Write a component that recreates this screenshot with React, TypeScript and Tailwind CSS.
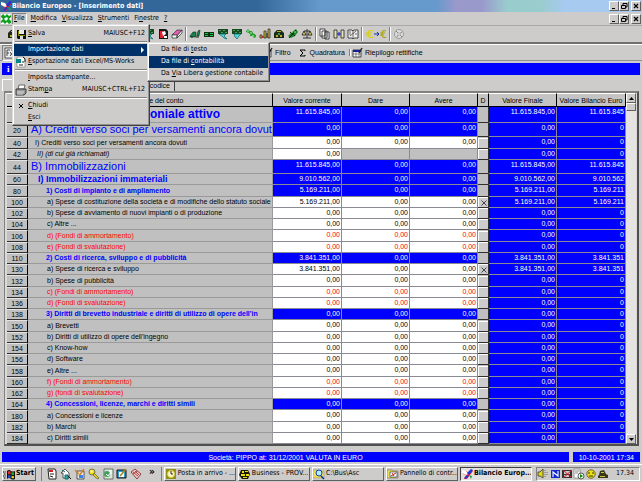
import React from "react";

type Kind = "title" | "h1" | "h2" | "h3" | "item" | "italic" | "fund";

type Row = {
  code: string;
  label: string;
  kind: Kind;
  value?: string;
  checked?: boolean;
};

const rows: Row[] = [
  { code: "10", label: "Stato patrimoniale attivo", kind: "title", value: "11.615.845" },
  { code: "20", label: "A) Crediti verso soci per versamenti ancora dovuti", kind: "h1" },
  { code: "40", label: "I) Crediti verso soci per versamenti ancora dovuti", kind: "item" },
  { code: "42", label: "II) (di cui già richiamati)", kind: "italic" },
  { code: "44", label: "B) Immobilizzazioni", kind: "h1", value: "11.615.845" },
  { code: "60", label: "I) Immobilizzazioni immateriali", kind: "h2", value: "9.010.562" },
  { code: "80", label: "1) Costi di impianto e di ampliamento", kind: "h3", value: "5.169.211" },
  { code: "100", label: "a) Spese di costituzione della società e di modifiche dello statuto sociale", kind: "item", value: "5.169.211", checked: true },
  { code: "102", label: "b) Spese di avviamento di nuovi impianti o di produzione", kind: "item" },
  { code: "104", label: "c) Altre ...", kind: "item" },
  { code: "106", label: "d) (Fondi di ammortamento)", kind: "fund" },
  { code: "108", label: "e) (Fondi di svalutazione)", kind: "fund" },
  { code: "110", label: "2) Costi di ricerca, sviluppo e di pubblicità", kind: "h3", value: "3.841.351" },
  { code: "130", label: "a) Spese di ricerca e sviluppo", kind: "item", value: "3.841.351", checked: true },
  { code: "132", label: "b) Spese di pubblicità", kind: "item" },
  { code: "134", label: "c) (Fondi di ammortamento)", kind: "fund" },
  { code: "136", label: "d) (Fondi di svalutazione)", kind: "fund" },
  { code: "138", label: "3) Diritti di brevetto industriale e diritti di utilizzo di opere dell'in", kind: "h3" },
  { code: "150", label: "a) Brevetti", kind: "item" },
  { code: "152", label: "b) Diritti di utilizzo di opere dell'ingegno", kind: "item" },
  { code: "154", label: "c) Know-how", kind: "item" },
  { code: "156", label: "d) Software", kind: "item" },
  { code: "158", label: "e) Altre ...", kind: "item" },
  { code: "160", label: "f) (Fondi di ammortamento)", kind: "fund" },
  { code: "162", label: "g) (fondi di svalutazione)", kind: "fund" },
  { code: "164", label: "4) Concessioni, licenze, marchi e diritti simili", kind: "h3" },
  { code: "180", label: "a) Concessioni e licenze", kind: "item" },
  { code: "182", label: "b) Marchi", kind: "item" },
  { code: "184", label: "c) Diritti simili", kind: "item" },
];

const labelStyle: Record<Kind, string> = {
  title: "text-center text-[12px] leading-[15px] font-bold text-[#0000ff]",
  h1: "pl-[3px] text-[11px] leading-[13px] text-[#0000ff]",
  h2: "pl-[10px] text-[9px] leading-[10px] font-bold text-[#0000ff]",
  h3: "pl-[18px] text-[7px] leading-[10px] font-bold text-[#0000ff]",
  item: "pl-[19px] text-[7px] leading-[10px] text-black",
  italic: "pl-[9px] text-[7px] leading-[10px] italic text-black",
  fund: "pl-[19px] text-[7px] leading-[10px] text-[#ff0000]",
};

const raised = "border border-t-white border-l-white border-r-[#606060] border-b-[#606060] bg-[#cecccb]";
const sunken = "border border-t-[#808080] border-l-[#808080] border-r-white border-b-white";

function Svg({ children, w = 12, className = "" }: { children: React.ReactNode; w?: number; className?: string }) {
  return (
    <svg width={w} height="12" viewBox={`0 0 ${w} 12`} className={`shrink-0 ${className}`} aria-hidden="true">
      {children}
    </svg>
  );
}

const AppLogo = () => (
  <Svg>
    <path d="M1 3h4l2 2 3-3 2 1-3 4-3 4H3l2-4-3-1z" fill="#f02020" />
    <path d="M1 2l4 1 2 3-2 1-4-2z" fill="#fff" />
    <path d="M6 5l4-4 2 1-4 5z" fill="#2030e0" />
    <path d="M3 10l3-3 2 1-3 3z" fill="#2838d0" />
    <path d="M8 7l3 1-1 3z" fill="#20a040" />
  </Svg>
);
const GreenLogo = () => (
  <Svg>
    <rect x="1" y="1" width="10" height="10" fill="#fff" />
    <path d="M1 3l2-2 2 2 2-2 2 2 2-1v2L9 6l2 2v2l-2 1-2-2-2 2-2-2-2 1V8l2-2-2-2zM5 5L4 6l2 2 2-2-1-2z" fill="#10a020" />
  </Svg>
);
const Floppy = () => (
  <Svg>
    <path d="M2 2h9v9H3L2 10z" fill="#111" />
    <path d="M4 2h5v4H4z" fill="#e8e8e8" />
    <path d="M3 3h1v4h6v1H3z" fill="#8a8a00" />
    <path d="M5 8h3v3H5z" fill="#ddd" />
  </Svg>
);
const ExcelFile = () => (
  <Svg>
    <path d="M2 1h7l1 2v8H2z" fill="#fff" stroke="#555" strokeWidth=".5" />
    <path d="M1 3h5v4H1z" fill="#088" />
    <path d="M8 1l2 2v3M4 9h4M7 6h2" stroke="#222" fill="none" />
  </Svg>
);
const Printer = () => (
  <Svg>
    <path d="M4 1h6L9 5H3z" fill="#fff" stroke="#333" strokeWidth=".7" />
    <path d="M1 5h10v4l-2 2H1z" fill="#999" stroke="#222" strokeWidth=".8" />
    <path d="M2 8h7M2 10h6" stroke="#eee" strokeWidth=".8" />
  </Svg>
);
const RedDoc = () => (
  <Svg>
    <path d="M2 1h7l2 2v8H2z" fill="#181818" />
    <path d="M3 3h3l2 3-2 4H3z" fill="#e02030" />
    <path d="M5 4l3-1 1 3-3 2zM7 8h3v2H7z" fill="#fff" />
  </Svg>
);
const Eraser = () => (
  <Svg>
    <path d="M1 7l5-5h5L6 8z" fill="#e060b0" stroke="#222" strokeWidth=".6" />
    <path d="M1 7h5v3H1zM6 8l5-6v3l-5 5z" fill="#fff" stroke="#222" strokeWidth=".7" />
  </Svg>
);
const Truck = () => (
  <Svg>
    <path d="M1 8l3-4h3v5H1zM8 8l1-5 2-1-1 6z" fill="#188048" stroke="#083018" strokeWidth=".6" />
    <path d="M2 9h2M7 9h3" stroke="#222" />
  </Svg>
);
const Banknotes = () => (
  <Svg>
    <path d="M1 4h10v5H1z" fill="#103018" />
    <path d="M2 5h3v1H2zM7 5h3v1H7zM2 7h3v1H2zM7 7h3v1H7z" fill="#20c040" />
  </Svg>
);
const GridArrow = ({ flip = false }: { flip?: boolean }) => (
  <Svg>
    <path d="M1 1h10v5H1z" fill="#184820" />
    <path d="M2 2h2v1H2zM6 2h2v1H6zM4 4h2v1H4zM8 4h2v1H8z" fill="#40a050" />
    <path d={flip ? "M3 6h7L8 8l-2 3-2-2z" : "M2 6h7l-2 2 3 3-3-1-2-2z"} fill="#50d8d8" stroke="#086868" strokeWidth=".7" />
  </Svg>
);
const Checks = () => (
  <Svg>
    <path d="M1 3l2-2 2 2 2 0 1 2 3 2v2l-2 1-2-2-2 0-1-3-3-1z" fill="#28a030" />
    <path d="M2 3h2M5 5h2M7 8h2M4 6l1 1" stroke="#e0f8e0" strokeWidth=".8" />
  </Svg>
);
const Bars = () => (
  <Svg>
    <path d="M1 7h2v3H1zM5 3h2v7H5zM9 1h2v9H9z" fill="#c8b830" stroke="#333" strokeWidth=".8" />
    <path d="M3 8h2v2H3z" fill="#c03030" />
    <path d="M7 5h2v5H7z" fill="#555" />
  </Svg>
);
const Safe = () => (
  <Svg>
    <path d="M1 5l3-3h4l3 3v5H1z" fill="#202818" />
    <path d="M4 3h4v1H4zM3 7h2v2H3zM7 7h2v2H7z" fill="#b8b030" />
    <path d="M5 5h2v2H5z" fill="#20a050" />
  </Svg>
);
const Plant = () => (
  <Svg>
    <path d="M1 8l4-4 4-3 2 3-3 4-4 2z" fill="#188828" />
    <path d="M2 10l7-8M3 4l5 4" stroke="#102810" />
    <path d="M4 4h2M7 4h2" stroke="#a0e8a0" />
  </Svg>
);
const Scale = () => (
  <Svg>
    <path d="M6 1v9M3 3h6M3 3L1 7h4zM9 3L7 7h4zM2 10h8" stroke="#222" strokeWidth=".9" fill="#e8e060" />
  </Svg>
);
const Copies = () => (
  <Svg>
    <path d="M1 1h5v7H1zM3 3h5v7H3zM6 4h4v7H6z" fill="#fff" stroke="#222" strokeWidth=".8" />
    <path d="M7 6h2M7 8h2" stroke="#555" strokeWidth=".6" />
  </Svg>
);
const Split = () => (
  <Svg>
    <path d="M1 2h3v8H1zM8 2h3v8H8z" fill="#e8e0b0" stroke="#222" strokeWidth=".8" />
    <path d="M4 6h4M6 4v4" stroke="#1020d0" />
  </Svg>
);
const Book = () => (
  <Svg>
    <path d="M1 2h4l1 1 1-1h4v8H7l-1 1-1-1H1z" fill="#eee" stroke="#222" strokeWidth=".8" />
    <path d="M2 4h2M2 6h2M3 8l6-5M8 6h2M6 3v7" stroke="#333" strokeWidth=".7" />
  </Svg>
);
const Euro = () => (
  <Svg w={24}>
    <path d="M9 3Q4 1 4 6t5 3M1 5h7M1 7h6" stroke="#d8d000" strokeWidth="1.1" fill="none" />
    <path d="M10 6h4M13 4l2 2-2 2" stroke="#1030a0" fill="none" />
    <path d="M22 3q-4-2-4 3t4 3M16 5h5M16 7h4" stroke="#a8a010" strokeWidth="1.1" fill="none" />
  </Svg>
);
const Disc = () => (
  <Svg>
    <circle cx="6" cy="6" r="4.5" fill="#ddd" stroke="#999" />
    <path d="M3 3l3 3 3-2M6 6l-2 3M6 6l3 3" stroke="#888" fill="none" />
    <circle cx="6" cy="6" r="1.2" fill="#fff" stroke="#777" strokeWidth=".5" />
  </Svg>
);
const Fx = () => (
  <Svg>
    <path d="M1 1h10v10H1z" fill="#eee" stroke="#333" strokeWidth=".8" />
    <path d="M3 9V3h3M3 6h2M6 9l3-4M6 5l3 4M7 3h3" stroke="#222" strokeWidth=".8" fill="none" />
  </Svg>
);
const Table = () => (
  <Svg>
    <path d="M1 3h8v7H1z" fill="#fff" stroke="#222" strokeWidth=".8" />
    <path d="M1 3h8v2H1z" fill="#1020a0" />
    <path d="M1 7h8M4 5v5M7 5v5" stroke="#555" strokeWidth=".7" />
    <path d="M7 6l3-5" stroke="#222" strokeWidth="1.4" />
  </Svg>
);
const WinFlag = () => (
  <Svg>
    <path d="M4 3q2-2 4 0 2 1 4 0v8q-2 1-4 0-2-2-4 0z" fill="#111" />
    <path d="M5 3.5q1-1 2.5 0v3Q6 5.5 5 6.5z" fill="#f03020" />
    <path d="M8.5 4q1.5.8 2.5.3v2.500q-1 .5-2.500 0z" fill="#20b030" />
    <path d="M5 7.5q1-1 2.5 0v2.500Q6 9 5 10z" fill="#2050e0" />
    <path d="M8.5 7.8q1.5.7 2.5.2v2q-1 .6-2.500 0z" fill="#f0d020" />
    <path d="M0 4h3M1 6h2M0 8h3M1 10h2" stroke="#111" strokeDasharray="1 .6" />
  </Svg>
);
const DocRed = () => (
  <Svg>
    <path d="M2 1h7l1 2v8H3z" fill="#fff" stroke="#222" />
    <path d="M3 2h4v2H3z" fill="#d02020" />
    <path d="M4 6h4M4 8l3 1" stroke="#222" />
  </Svg>
);
const House = () => (
  <Svg>
    <path d="M1 5l4-4 4 4v5H3V5z" fill="#fff" stroke="#333" strokeWidth=".8" />
    <path d="M2 2l3 2M5 7h3v4H5z" stroke="#127070" fill="#30a8a0" />
    <path d="M8 8l3 3" stroke="#111" />
  </Svg>
);
const Tools = () => (
  <Svg>
    <path d="M3 3h7v8H3z" fill="#eee" stroke="#333" strokeWidth=".8" />
    <path d="M1 2l4 4M10 1L5 8" stroke="#d08020" strokeWidth="1.4" />
    <path d="M5 7h4v3H5z" fill="#4080e0" />
  </Svg>
);
const Key = () => (
  <Svg>
    <circle cx="4" cy="4" r="3" fill="#f0e020" stroke="#555" strokeWidth=".8" />
    <path d="M6 5l5 5-1 1-2-1-3-3z" fill="#e0d010" stroke="#444" strokeWidth=".6" />
    <circle cx="3.5" cy="3.5" r="1" fill="#fff" />
  </Svg>
);
const GreenDoc = () => (
  <Svg>
    <path d="M2 1h9v10H2z" fill="#d8e8d8" stroke="#444" strokeWidth=".7" />
    <circle cx="5" cy="6" r="3" fill="#40a060" />
    <path d="M7 3h3M8 5h2M4 6l2 2 3-4" stroke="#fff" fill="none" />
  </Svg>
);
const Desktop = () => (
  <Svg>
    <path d="M1 2h9v8H1z" fill="#30a0d0" stroke="#111" />
    <path d="M3 4h5v5H3z" fill="#fff" />
    <path d="M4 8l6-7" stroke="#b08020" strokeWidth="1.6" />
  </Svg>
);
const Diamond = () => (
  <Svg>
    <path d="M1 4l4-3 6 5-4 5z" fill="#e8c8c8" stroke="#802020" strokeWidth=".8" />
    <path d="M3 4l5 4M5 3l4 4M3 6l4-3" stroke="#c04040" />
  </Svg>
);
const Clock = () => (
  <Svg>
    <path d="M1 1h10v10H1z" fill="#909018" />
    <circle cx="6" cy="6" r="3.5" fill="#fff8d0" stroke="#d8d040" />
    <path d="M6 3v3h2" stroke="#222" fill="none" />
  </Svg>
);
const Bee = () => (
  <Svg>
    <path d="M2 2h7l2 4-2 5H3L0 7z" fill="#181800" />
    <path d="M3 3h2v2H3zM6 3h3v1H6zM2 6h4v2H2zM7 6h3v2H7zM4 9h4v1H4z" fill="#e8e020" />
  </Svg>
);
const FolderFind = () => (
  <Svg>
    <path d="M0 2h5l1 1h5v7H0z" fill="#f0e050" stroke="#886" strokeWidth=".5" />
    <circle cx="6" cy="5" r="3" fill="#b0f0ff" stroke="#1040c0" />
    <path d="M8 8l3 3" stroke="#1030a0" strokeWidth="1.6" />
  </Svg>
);
const Panel = () => (
  <Svg>
    <path d="M0 2h5l1 1h5v7H0z" fill="#f0e050" stroke="#665" strokeWidth=".6" />
    <path d="M3 4h7v5H3z" fill="#fff" stroke="#223" strokeWidth=".6" />
    <path d="M4 8l5-3M5 5l2 3" stroke="#c03020" />
  </Svg>
);
const Speaker = () => (
  <Svg>
    <path d="M1 4h2l3-3v9L3 8H1z" fill="#e0d820" stroke="#333" strokeWidth=".8" />
    <path d="M8 2v8M10 4v4" stroke="#555" strokeDasharray="1 1" strokeWidth=".8" />
  </Svg>
);
const Norton = () => (
  <Svg>
    <path d="M2 2h9v8H2z" fill="#1028d0" />
    <path d="M4 9V4l5 4V3" stroke="#fff" strokeWidth="1.1" fill="none" />
  </Svg>
);
const NetOff = () => (
  <Svg>
    <path d="M1 2h10v8H1z" fill="#333" />
    <path d="M3 3h6v3H3zM3 7h5v2H3z" fill="#ccc" />
    <path d="M2 2l8 7M11 2L2 10" stroke="#d02020" />
  </Svg>
);
const PagePlay = () => (
  <Svg>
    <path d="M1 1h6v9H1z" fill="#fff" stroke="#777" strokeWidth=".7" />
    <path d="M2 3h4M2 5h3" stroke="#555" strokeWidth=".7" />
    <circle cx="8" cy="8" r="3" fill="#e8ffe8" stroke="#222" strokeWidth=".7" />
    <path d="M7 6l3 2-3 2z" fill="#108020" />
  </Svg>
);
const Smile = () => (
  <Svg>
    <circle cx="6" cy="6" r="4.2" fill="#f0e010" stroke="#443" strokeWidth=".8" />
    <path d="M4 4v2M8 4v2M4 8h4" stroke="#222" fill="none" strokeWidth=".9" />
  </Svg>
);
const Modem = () => (
  <Svg>
    <path d="M2 7l1-4 4-1 2 4 2 1v3H1V8z" fill="#383818" />
    <path d="M4 4h3v1H4zM3 8h5v1H3z" fill="#c8c050" />
  </Svg>
);

function Tool({ label, children }: { label: string; children: React.ReactNode }) {
  return (
    <button type="button" aria-label={label} className="flex h-[14px] min-w-[14px] items-center justify-center">
      {children}
    </button>
  );
}

const Sep = () => <span className="mx-px h-[14px] w-[2px] shrink-0 border-l border-l-[#808080] border-r border-r-white" />;

function WindowButtons({ target }: { target: string }) {
  const box = `${raised} flex h-[10px] w-[10px] items-center justify-center`;
  return (
    <div className="ml-auto flex pr-px">
      <button type="button" aria-label={`Riduci ${target}`} className={box}>
        <svg width="8" height="8" aria-hidden="true"><path d="M2 6.5h3" stroke="#000" /></svg>
      </button>
      <button type="button" aria-label={`Ripristina ${target}`} className={box}>
        <svg width="8" height="8" aria-hidden="true"><path d="M3 3V1.5h4V5H5.500M1.500 3.500h4V6.500h-4z" stroke="#000" fill="none" /></svg>
      </button>
      <button type="button" aria-label={`Chiudi ${target}`} className={`${box} ml-[2px]`}>
        <svg width="8" height="8" aria-hidden="true"><path d="M2 2l4 4M6 2L2 6" stroke="#000" strokeWidth="1.2" /></svg>
      </button>
    </div>
  );
}

function MenuItem({ icon, label, keyIndex, shortcut, active, arrow, nested }: { icon?: React.ReactNode; label: string; keyIndex?: number; shortcut?: string; active?: boolean; arrow?: boolean; nested?: boolean }) {
  const k = keyIndex ?? -1;
  return (
    <button
      type="button"
      role="menuitem"
      className={`flex h-[12px] w-full items-center whitespace-nowrap pr-[3px] text-left ${active ? "bg-[#003068] text-white" : "text-black"}`}
    >
      <span className={`flex shrink-0 justify-center ${nested ? "w-[12px]" : "w-[14px]"}`}>{icon}</span>
      <span>
        {k < 0 ? label : <>{label.slice(0, k)}<u>{label[k]}</u>{label.slice(k + 1)}</>}
      </span>
      {shortcut && <span className="ml-auto">{shortcut}</span>}
      {arrow && (
        <svg className="ml-auto" width="4" height="6" aria-hidden="true"><path d="M0 0l3 3-3 3z" fill="#fff" /></svg>
      )}
    </button>
  );
}

const MenuLine = () => <div role="separator" className="mx-px my-px h-[2px] border-t border-t-[#808080] border-b border-b-white" />;

function FileMenu() {
  return (
    <div role="menu" aria-label="File" className="absolute top-[11px] left-0 z-20 w-[138px] border border-t-[#dddddd] border-l-[#dddddd] border-r-[#404040] border-b-[#404040] bg-[#cecccb] p-px pt-[3px] shadow-[inset_-1px_-1px_0_#909090,inset_1px_1px_0_#ffffff]">
      <MenuItem icon={<Floppy />} label="Salva" keyIndex={0} shortcut="MAIUSC+F12" />
      <MenuLine />
      <div className="relative">
        <MenuItem label="Importazione dati" active arrow />
        <div role="menu" aria-label="Importazione dati" className="absolute -top-[2px] left-full z-30 -ml-px w-[123px] border border-t-[#dddddd] border-l-[#dddddd] border-r-[#404040] border-b-[#404040] bg-[#cecccb] p-px shadow-[inset_-1px_-1px_0_#909090,inset_1px_1px_0_#ffffff]">
          <MenuItem nested label="Da file di testo" keyIndex={11} />
          <MenuItem nested label="Da file di contabilità" keyIndex={11} active />
          <MenuItem nested label="Da Via Libera gestione contabile" keyIndex={3} />
        </div>
      </div>
      <MenuItem icon={<ExcelFile />} label="Esportazione dati Excel/MS-Works" keyIndex={0} />
      <MenuLine />
      <MenuItem label="Imposta stampante..." keyIndex={0} />
      <MenuItem icon={<Printer />} label="Stampa" keyIndex={4} shortcut="MAIUSC+CTRL+F12" />
      <MenuLine />
      <MenuItem
        icon={<svg width="6" height="6" aria-hidden="true"><path d="M1 1l4 4M5 1L1 5" stroke="#000" /></svg>}
        label="Chiudi"
        keyIndex={0}
      />
      <MenuItem label="Esci" keyIndex={0} />
    </div>
  );
}

const menus = [
  ["M", "odifica"],
  ["V", "isualizza"],
  ["S", "trumenti"],
];

function GridRow({ row, index }: { row: Row; index: number }) {
  const heading = row.kind === "title" || row.kind === "h1" || row.kind === "h2" || row.kind === "h3";
  const amount = row.value ? `${row.value},00` : "0,00";
  const height =
    row.kind === "title" ? "h-[16px]" : row.kind === "h1" ? "h-[14px]" : index % 4 === 2 ? "h-[12px]" : "h-[11px]";
  const tone = heading ? "bg-[#0000ff] text-white" : row.kind === "fund" ? "bg-white text-[#ff0000]" : "bg-white text-black";
  const line = "border-r border-b border-[#8a8a94] p-0 pr-px text-right align-top leading-[10px] whitespace-nowrap overflow-hidden";
  const blank = row.kind === "italic";
  return (
    <tr className={height}>
      <th scope="row" className="border-t border-t-[#e4e4e4] border-r border-r-black border-b border-b-[#303030] bg-[#c0c0c0] p-0 text-center font-normal leading-[9px]">
        {row.code}
      </th>
      <td className={`overflow-hidden border-b border-r border-[#9a9a9a] bg-[#c0c0c0] p-0 whitespace-nowrap ${row.code === "40" ? "pl-[7px] text-[7px] leading-[10px]" : labelStyle[row.kind]}`}>
        {row.label}
      </td>
      <td className={`${line} ${tone}`}>{amount}</td>
      <td className={`${line} ${blank ? "bg-[#c0c0c0]" : tone}`}>{blank ? "" : "0,00"}</td>
      <td className={`${line} ${blank ? "bg-[#c0c0c0]" : tone}`}>{blank ? "" : "0,00"}</td>
      <td className="border-r border-b border-[#303030] bg-[#c0c0c0] p-0">
        {!heading && (
          <label className="relative block h-[10px] border-t border-l border-white bg-[#cccccc]">
            <input type="checkbox" aria-label={`Dettaglio ${row.code}`} defaultChecked={row.checked} className="peer block h-full w-full appearance-none" />
            <svg className="pointer-events-none absolute inset-0 m-auto hidden peer-checked:block" width="6" height="6" aria-hidden="true">
              <path d="M.5.5l5 5M5.500.5l-5 5" stroke="#333" strokeWidth=".9" />
            </svg>
          </label>
        )}
      </td>
      <td className={`${line} bg-[#0000ff] text-white`}>{amount}</td>
      <td className={`${line} bg-[#0000ff] text-white`}>{row.value ?? "0"}</td>
    </tr>
  );
}

const headers = ["", "Descrizione del conto", "Valore corrente", "Dare", "Avere", "D", "Valore Finale", "Valore Bilancio Euro"];

function LedgerTable() {
  return (
    <table className="w-full table-fixed border-separate border-spacing-0 text-[7px]">
      <colgroup>
        <col className="w-[21px]" />
        <col />
        <col className="w-[69px]" />
        <col className="w-[68px]" />
        <col className="w-[68px]" />
        <col className="w-[11px]" />
        <col className="w-[68px]" />
        <col className="w-[69px]" />
      </colgroup>
      <thead>
        <tr className="h-[14px]">
          {headers.map((h, i) => (
            <th key={i} scope="col" className="border-t border-t-white border-r border-r-black border-b border-b-black bg-[#c4c4c4] p-0 text-center font-normal leading-[9px] whitespace-nowrap">
              {h}
            </th>
          ))}
        </tr>
      </thead>
      <tbody>
        {rows.map((r, i) => (
          <GridRow key={r.code} row={r} index={i} />
        ))}
      </tbody>
    </table>
  );
}

const tasks = [
  { icon: <Clock />, label: "Posta in arrivo - ..." },
  { icon: <Bee />, label: "Business - PROV..." },
  { icon: <FolderFind />, label: "C:\\Bus\\Asc" },
  { icon: <Panel />, label: "Pannello di contr..." },
  { icon: <AppLogo />, label: "Bilancio Europ...", active: true },
];

export default function App() {
  return (
    <div className="flex h-screen flex-col overflow-hidden bg-[#cecccb] font-['Liberation_Sans',Arial,sans-serif] text-[7px] leading-[9px] text-black">
      <header className="flex h-[12px] shrink-0 items-center bg-[linear-gradient(90deg,#336699_0%,#336699_40%,#6699cc_50%,#6699cc_68%,#9999cc_71%,#9999cc_75%,#99cccc_79%,#99cccc_84%,#a6caf0_88%)] font-['DejaVu_Sans_Condensed','DejaVu_Sans',sans-serif] font-bold text-white">
        <AppLogo />
        <h1 className="whitespace-nowrap">Bilancio Europeo - [Inserimento dati]</h1>
        <WindowButtons target="applicazione" />
      </header>

      <nav className="flex h-[14px] shrink-0 items-center border-b border-b-[#a8a8a8] font-['DejaVu_Sans_Condensed','DejaVu_Sans',sans-serif]">
        <GreenLogo />
        <div className="relative">
          <button type="button" aria-haspopup="menu" aria-expanded="true" className={`${sunken} flex h-[12px] items-center px-px`}><span><u>F</u>ile</span></button>
          <FileMenu />
        </div>
        <div className="flex gap-[5px] pl-[4px]">
          {menus.map(([a, b]) => (
            <button type="button" key={a}><u>{a}</u>{b}</button>
          ))}
          <button type="button">Fi<u>n</u>estre</button>
          <button type="button"><u>?</u></button>
        </div>
        <WindowButtons target="documento" />
      </nav>

      <div role="toolbar" aria-label="Standard" className="flex h-[18px] shrink-0 items-center border-b-2 border-b-[#707070] pl-[6px]">
        <Tool label="Apri"><Safe /></Tool>
        <div className="flex items-center pl-[122px]">
          <Tool label="Griglia"><GridArrow /></Tool>
          <Tool label="Anteprima"><RedDoc /></Tool>
          <Tool label="Cancella"><Eraser /></Tool>
          <Sep />
          <Tool label="Fornitori"><Truck /></Tool>
          <Tool label="Cassa"><Banknotes /></Tool>
          <Tool label="Importa"><GridArrow /></Tool>
          <Tool label="Esporta"><GridArrow flip /></Tool>
          <Tool label="Controlli"><Checks /></Tool>
          <Tool label="Grafico"><Bars /></Tool>
          <Tool label="Cassaforte"><Safe /></Tool>
          <Tool label="Ammortamenti"><Plant /></Tool>
          <Tool label="Bilancia"><Scale /></Tool>
          <Sep />
          <Tool label="Copia"><Copies /></Tool>
          <Tool label="Confronta"><Split /></Tool>
          <Tool label="Libro"><Book /></Tool>
          <Sep />
          <Tool label="Converti in euro"><Euro /></Tool>
          <Sep />
          <Tool label="Disco"><Disc /></Tool>
        </div>
      </div>

      <div role="toolbar" aria-label="Strumenti" className="flex h-[17px] shrink-0 items-center border-t border-t-white border-b border-b-[#909090] pl-[2px]">
        <span className={`${sunken} flex`}><Tool label="Formula"><Fx /></Tool></span>
        <div className="flex items-center pl-[244px]">
          <button type="button" className="flex items-center gap-px"><Table />Filtro</button>
          <button type="button" className="flex items-center gap-[4px] pl-[8px]">
            <svg width="7" height="8" aria-hidden="true"><path d="M6 2V1H1l3 3-3 3h5V6" stroke="#000" fill="none" /></svg>
            Quadratura
          </button>
          <span className="ml-[3px]"><Sep /></span>
          <button type="button" className="flex items-center gap-px whitespace-nowrap"><Table />Riepilogo rettifiche</button>
        </div>
      </div>

      <div className="mx-[2px] mt-[2px] flex h-[12px] shrink-0 items-center bg-[#0000ff] pl-[5px] font-['Liberation_Serif',serif] text-[9px] font-bold text-white">i</div>

      <div className="mx-[2px] mt-[4px] flex h-[12px] shrink-0" role="tablist">
        <button type="button" role="tab" aria-selected="true" aria-label="Descrizione" className="w-[85px] border-t border-l border-white border-r border-r-[#404040]" />
        <button type="button" role="tab" aria-selected="false" className="w-[88px] border-t border-t-white border-r border-r-[#404040] pr-[4px] text-right">codice</button>
      </div>

      <main className="mr-[3px] ml-[4px] flex min-h-0 flex-1 border-t-2 border-t-[#808080] border-r-2 border-r-[#505050] border-b-2 border-b-[#505050] border-l border-l-[#808080] bg-[#dcdad9] pl-[2px]">
        <div className="min-w-0 flex-1 overflow-hidden"><LedgerTable /></div>
        <div className="mr-px flex w-[10px] shrink-0 flex-col bg-[#e6e4e2]">
          <button type="button" aria-label="Scorri su" className={`${raised} flex h-[10px] items-center justify-center`}>
            <svg width="5" height="3" aria-hidden="true"><path d="M0 3l2.500-3L5 3z" /></svg>
          </button>
          <span className={`${raised} h-[8px]`} />
          <button type="button" aria-label="Scorri giù" className={`${raised} mt-auto flex h-[10px] items-center justify-center`}>
            <svg width="5" height="3" aria-hidden="true"><path d="M0 0h5L2.500 3z" /></svg>
          </button>
        </div>
      </main>

      <footer className="mx-[2px] mt-[6px] flex h-[10px] shrink-0 gap-[4px] text-white">
        <div className="flex flex-1 items-center justify-center bg-[#0000ff]">Società: PIPPO at: 31/12/2001 VALUTA IN EURO</div>
        <div className="flex w-[67px] items-center justify-end bg-[#0000ff] pr-[6px]">10-10-2001 17:34</div>
      </footer>

      <div className="mt-[2px] flex h-[18px] shrink-0 items-center border-t border-t-white px-[2px] font-['DejaVu_Sans_Condensed','DejaVu_Sans',sans-serif]">
        <button type="button" className={`${raised} flex h-[14px] w-[34px] shrink-0 items-center gap-px font-bold`}><WinFlag />Start</button>
        <div className="ml-[5px] flex items-center border-l border-l-[#808080] pl-[3px]">
          <Tool label="Documento"><DocRed /></Tool>
          <Tool label="Home"><House /></Tool>
          <Tool label="Utilità"><Tools /></Tool>
          <Tool label="Chiavi"><Key /></Tool>
          <Tool label="Rete"><GreenDoc /></Tool>
          <Tool label="Desktop"><Desktop /></Tool>
          <Tool label="Agenda"><Diamond /></Tool>
        </div>
        <button type="button" aria-label="Altri" className="mx-[6px] pb-[4px] text-[10px] font-bold">»</button>
        <div className="flex min-w-0 flex-1 gap-[2px] border-l border-l-[#808080] pl-[2px]">
          {tasks.map((t) => (
            <button
              type="button"
              key={t.label}
              className={`flex h-[14px] min-w-0 flex-1 items-center gap-px overflow-hidden whitespace-nowrap ${t.active ? "border border-t-[#404040] border-l-[#404040] border-r-white border-b-white bg-[#e2e0de] font-bold" : raised}`}
            >
              {t.icon}
              {t.label}
            </button>
          ))}
        </div>
        <div className={`${sunken} ml-[4px] flex h-[14px] shrink-0 items-center justify-between pr-[5px]`}>
          <Speaker /><Norton /><NetOff /><PagePlay /><Smile /><Modem />
          <time className="pl-[7px]">17.34</time>
        </div>
      </div>
    </div>
  );
}
